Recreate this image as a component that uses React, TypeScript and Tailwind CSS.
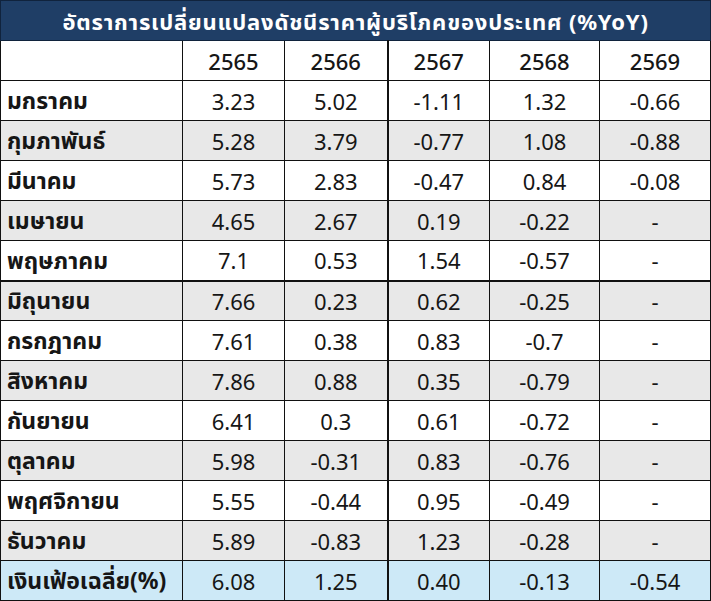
const years = ["2565", "2566", "2567", "2568", "2569"];

const rows = [
  { month: "มกราคม", values: ["3.23", "5.02", "-1.11", "1.32", "-0.66"] },
  { month: "กุมภาพันธ์", values: ["5.28", "3.79", "-0.77", "1.08", "-0.88"] },
  { month: "มีนาคม", values: ["5.73", "2.83", "-0.47", "0.84", "-0.08"] },
  { month: "เมษายน", values: ["4.65", "2.67", "0.19", "-0.22", "-"] },
  { month: "พฤษภาคม", values: ["7.1", "0.53", "1.54", "-0.57", "-"] },
  { month: "มิถุนายน", values: ["7.66", "0.23", "0.62", "-0.25", "-"] },
  { month: "กรกฎาคม", values: ["7.61", "0.38", "0.83", "-0.7", "-"] },
  { month: "สิงหาคม", values: ["7.86", "0.88", "0.35", "-0.79", "-"] },
  { month: "กันยายน", values: ["6.41", "0.3", "0.61", "-0.72", "-"] },
  { month: "ตุลาคม", values: ["5.98", "-0.31", "0.83", "-0.76", "-"] },
  { month: "พฤศจิกายน", values: ["5.55", "-0.44", "0.95", "-0.49", "-"] },
  { month: "ธันวาคม", values: ["5.89", "-0.83", "1.23", "-0.28", "-"] },
];

const average = { month: "เงินเฟ้อเฉลี่ย(%)", values: ["6.08", "1.25", "0.40", "-0.13", "-0.54"] };

const colWidths = ["w-[182px]", "w-[102px]", "w-[103px]", "w-[102px]", "w-[110px]", "w-[111px]"];

function Row({ month, values, bg, thickTop }: { month: string; values: string[]; bg: string; thickTop?: boolean }) {
  const top = thickTop ? "border-t-2" : "border-t";
  return (
    <tr className={`h-10 ${bg}`}>
      <td className={`${top} border-l border-r border-[#111] pl-[6px] text-left text-[23px] font-bold`}>{month}</td>
      {values.map((v, i) => (
        <td
          key={i}
          className={`${top} border-[#111] text-center ${i === 1 ? "border-r-2" : "border-r"}`}
        >
          {v}
        </td>
      ))}
    </tr>
  );
}

export default function App() {
  return (
    <div className="w-[711px] h-[601px] bg-white">
      <table
        className="w-[710px] table-fixed border-collapse text-[22px] leading-none text-[#161616]"
        style={{ fontFamily: '"Noto Sans", "Noto Sans Thai", Tahoma, sans-serif' }}
      >
        <colgroup>
          {colWidths.map((w, i) => (
            <col key={i} className={w} />
          ))}
        </colgroup>
        <tbody>
          <tr className="h-10 bg-[#1f3e66]">
            <td colSpan={6} className="border border-[#10233d] text-center font-bold text-white tracking-[0.8px]">
              อัตราการเปลี่ยนแปลงดัชนีราคาผู้บริโภคของประเทศ (%YoY)
            </td>
          </tr>
          <tr className="h-10 bg-white">
            <td className="border border-[#111]"></td>
            {years.map((y, i) => (
              <td key={y} className={`border-t border-b border-[#111] text-center font-medium ${i === 1 ? "border-r-2" : "border-r"}`}>
                {y}
              </td>
            ))}
          </tr>
          {rows.map((r, idx) => (
            <Row
              key={r.month}
              month={r.month}
              values={r.values}
              bg={idx % 2 === 1 ? "bg-[#e8e8e8]" : "bg-white"}
              thickTop={idx === 5}
            />
          ))}
          <tr className="h-10 bg-[#cde9f7]">
            <td className="border border-[#111] pl-[6px] text-left text-[23px] font-bold">{average.month}</td>
            {average.values.map((v, i) => (
              <td key={i} className={`border-t border-b border-[#111] text-center ${i === 1 ? "border-r-2" : "border-r"}`}>
                {v}
              </td>
            ))}
          </tr>
        </tbody>
      </table>
    </div>
  );
}
